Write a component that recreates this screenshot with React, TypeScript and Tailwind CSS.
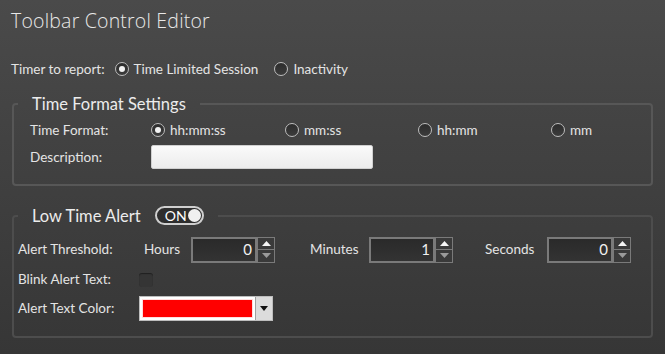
import React from "react";

const font = { fontFamily: 'Lato, "Open Sans", sans-serif' };

function Radio({ checked, label }: { checked?: boolean; label: string }) {
  return (
    <div className="flex items-center gap-[5px]">
      <span className="flex h-[14px] w-[14px] items-center justify-center rounded-full border border-[#bdbdbd] bg-gradient-to-b from-[#2c2c2c] to-[#3c3c3c]">
        {checked && <span className="h-[6px] w-[6px] rounded-full bg-[#f2f2f2]" />}
      </span>
      <span>{label}</span>
    </div>
  );
}

function Spin({ value }: { value: string }) {
  return (
    <div className="flex h-[26px]">
      <div className="flex w-[66px] items-center justify-end border-2 border-[#7a7a7a] bg-gradient-to-b from-[#2a2a2a] to-[#333] pr-[3px] text-[15px] text-[#f0f0f0]">
        {value}
      </div>
      <div className="flex w-[18px] flex-col">
        <div className="flex h-[13px] items-center justify-center border border-[#7a7a7a] bg-[#3a3a3a]">
          <svg width="9" height="5" viewBox="0 0 9 5"><path d="M0 5 L4.5 0 L9 5 Z" fill="#f5f5f5" /></svg>
        </div>
        <div className="flex h-[13px] items-center justify-center border border-t-0 border-[#7a7a7a] bg-[#3a3a3a]">
          <svg width="9" height="5" viewBox="0 0 9 5"><path d="M0 0 L4.5 5 L9 0 Z" fill="#9a9a9a" /></svg>
        </div>
      </div>
    </div>
  );
}

export default function App() {
  return (
    <div
      className="h-[354px] w-[665px] overflow-hidden bg-gradient-to-b from-[#4a4a4a] to-[#363636] text-[13.5px] text-[#e4e4e4]"
      style={font}
    >
      {/* header */}
      <div className="px-[11px] pt-[6px] text-[19.5px] font-light tracking-[0.2px] text-[#e8e8e8]" style={{ fontFamily: '"Open Sans", sans-serif' }}>
        Toolbar Control Editor
      </div>

      {/* timer choice */}
      <div className="mt-[24px] flex items-center px-[11px]">
        <span className="mr-[10px]">Timer to report:</span>
        <Radio checked label="Time Limited Session" />
        <div className="ml-[16px]">
          <Radio label="Inactivity" />
        </div>
      </div>

      {/* time format */}
      <fieldset className="mx-[12px] mt-[14px] h-[92px] rounded-[4px] border-2 border-[#575757] p-0">
        <legend className="ml-[4px] px-[14px] text-[16.5px] leading-[20px] text-[#ececec]">Time Format Settings</legend>
        <div className="px-[16px]">
          <div className="mt-[6px] flex items-center">
            <span className="w-[121px]">Time Format:</span>
            <div className="w-[134px]"><Radio checked label="hh:mm:ss" /></div>
            <div className="w-[133px]"><Radio label="mm:ss" /></div>
            <div className="w-[133px]"><Radio label="hh:mm" /></div>
            <Radio label="mm" />
          </div>
          <div className="mt-[5px] flex items-center">
            <span className="w-[121px]">Description:</span>
            <div className="h-[24px] w-[222px] rounded-[2px] border border-[#d0d0d0] bg-gradient-to-b from-[#fafafa] to-[#ececec]" />
          </div>
        </div>
      </fieldset>

      {/* low time alert */}
      <fieldset className="mx-[12px] mt-[20px] h-[132px] rounded-[4px] border-2 border-[#4d4d4d] p-0">
        <legend className="ml-[4px] flex items-center px-[14px] text-[16.5px] leading-[20px] text-[#ececec]">
          <span>Low Time Alert</span>
          <span className="ml-[14px] flex h-[19px] w-[49px] items-center justify-between rounded-full border-2 border-[#cfcfcf] bg-[#2e2e2e] pl-[8px] pr-[1px] text-[14px] leading-none text-white">
            ON
            <span className="h-[13px] w-[13px] rounded-full bg-[#f0f0f0]" />
          </span>
        </legend>
        <div className="pl-[4px] pr-[16px]">
          <div className="mt-[11px] flex items-center">
            <span className="w-[126px]">Alert Threshold:</span>
            <span className="w-[47px]">Hours</span>
            <Spin value="0" />
            <span className="ml-[35px] w-[59px]">Minutes</span>
            <Spin value="1" />
            <span className="ml-[32px] w-[62px]">Seconds</span>
            <Spin value="0" />
          </div>
          <div className="mt-[6px] flex h-[22px] items-center">
            <span className="w-[121px]">Blink Alert Text:</span>
            <span className="h-[14px] w-[14px] rounded-[3px] bg-[#353535] shadow-[inset_0_1px_1px_rgba(0,0,0,0.4)]" />
          </div>
          <div className="mt-[5px] flex items-center">
            <span className="w-[121px]">Alert Text Color:</span>
            <div className="flex h-[25px] w-[134px] border border-[#bdbdbd] bg-white">
              <div className="m-[2px] flex-1 border border-[#ffdede] bg-[#ff0000]" />
              <div className="flex w-[17px] items-center justify-center border-l border-[#a0a0a0] bg-[#dcdcdc]">
                <svg width="8" height="5" viewBox="0 0 8 5"><path d="M0 0 L4 5 L8 0 Z" fill="#111" /></svg>
              </div>
            </div>
          </div>
        </div>
      </fieldset>
    </div>
  );
}
